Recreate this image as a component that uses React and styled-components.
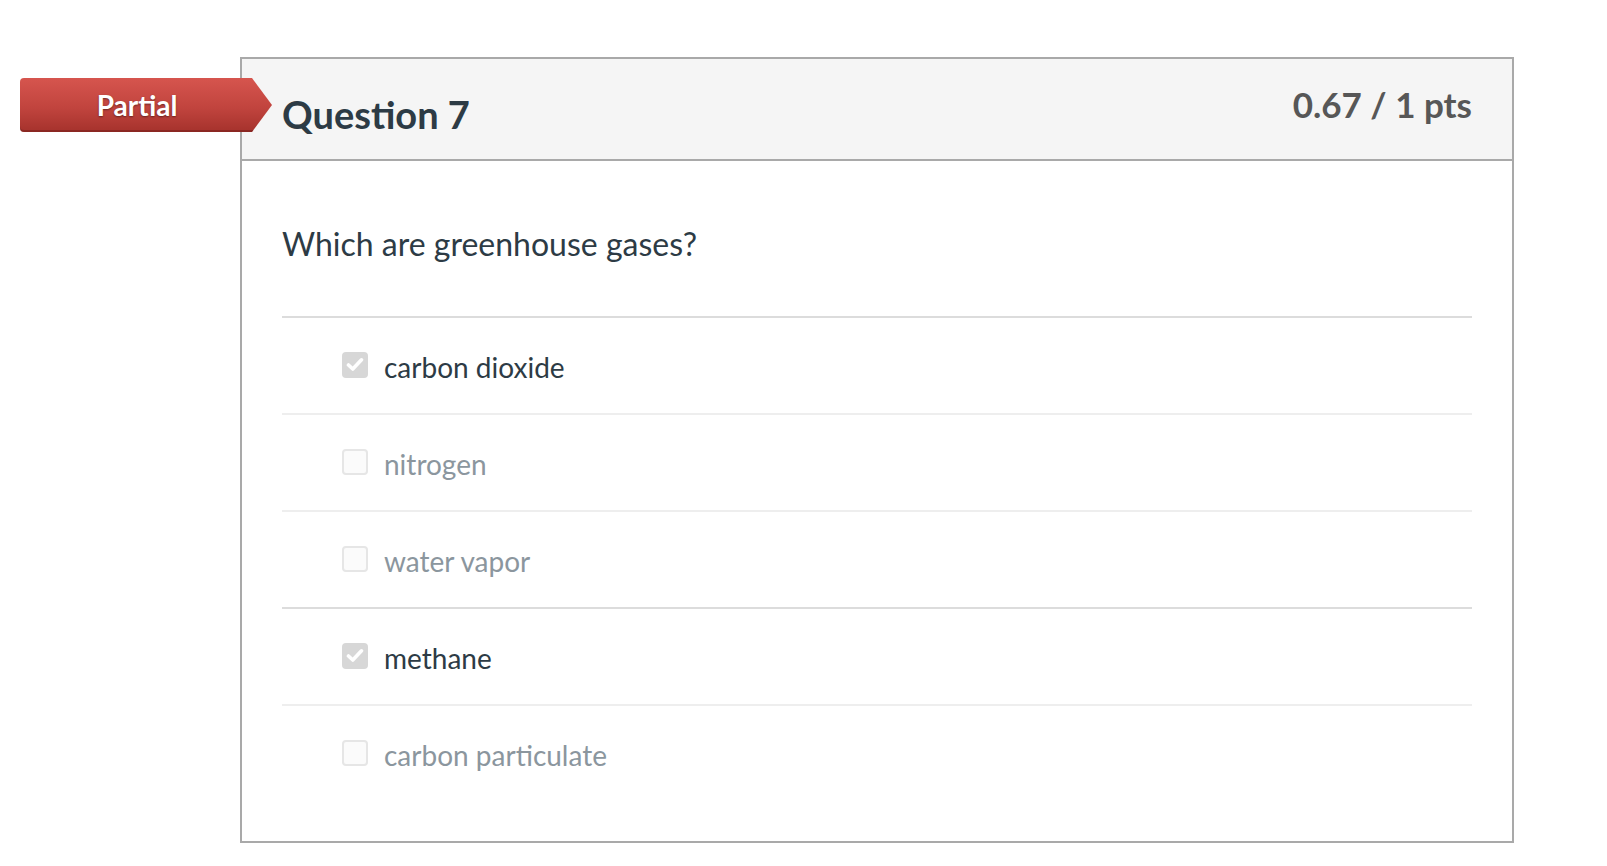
import styled, { createGlobalStyle } from "styled-components";

const GlobalStyle = createGlobalStyle`
  body {
    margin: 0;
    background: #fff;
    font-family: Lato, "Open Sans", sans-serif;
  }
`;

const answers = [
  { text: "carbon dioxide", checked: true },
  { text: "nitrogen", checked: false },
  { text: "water vapor", checked: false },
  { text: "methane", checked: true },
  { text: "carbon particulate", checked: false },
];

export default function App() {
  return (
    <>
      <GlobalStyle />
      <Page>
        <Badge>
          <span>Partial</span>
        </Badge>
        <Card>
          <Header>
            <Title>Question 7</Title>
            <Points>0.67 / 1 pts</Points>
          </Header>
          <Body>
            <QuestionText>Which are greenhouse gases?</QuestionText>
            <AnswerList>
              {answers.map((a) => (
                <Answer key={a.text} $selected={a.checked}>
                  <Box $checked={a.checked}>
                    {a.checked && (
                      <svg width="18" height="15" viewBox="0 0 18 15">
                        <path
                          d="M2.5 8 L6.8 12 L15.5 2.8"
                          fill="none"
                          stroke="#fff"
                          strokeWidth="3.6"
                          strokeLinecap="round"
                          strokeLinejoin="round"
                        />
                      </svg>
                    )}
                  </Box>
                  <Label $checked={a.checked}>{a.text}</Label>
                </Answer>
              ))}
            </AnswerList>
          </Body>
        </Card>
      </Page>
    </>
  );
}

const Page = styled.div`
  position: relative;
  padding: 57px 0 20px 240px;
`;

const Badge = styled.div`
  position: absolute;
  left: 20px;
  top: 78px;
  width: 252px;
  height: 54px;
  z-index: 2;
  display: flex;
  align-items: center;
  box-sizing: border-box;
  border-radius: 4px 0 0 4px;
  background: linear-gradient(to bottom, #d6554e 0%, #c1443e 55%, #a5322c 100%);
  box-shadow: inset 0 -2px 0 rgba(90, 20, 16, 0.35);
  clip-path: polygon(0 0, 232px 0, 100% 50%, 232px 100%, 0 100%);

  span {
    width: 234px;
    text-align: center;
    color: #fff;
    font-size: 28px;
    font-weight: 700;
    text-shadow: 0 1px 2px rgba(0, 0, 0, 0.45);
  }
`;

const Card = styled.div`
  width: 1274px;
  box-sizing: border-box;
  border: 2px solid #a9a9a9;
`;

const Header = styled.div`
  display: flex;
  justify-content: space-between;
  align-items: flex-start;
  height: 102px;
  box-sizing: border-box;
  padding: 24px 40px 0 40px;
  background: #f5f5f5;
  border-bottom: 2px solid #a9a9a9;
`;

const Title = styled.h2`
  margin: 9px 0 0;
  font-size: 38px;
  line-height: 1.2;
  font-weight: 700;
  color: #2d3b45;
`;

const Points = styled.div`
  font-size: 35px;
  line-height: 1.2;
  font-weight: 700;
  color: #575757;
`;

const Body = styled.div`
  padding: 64px 40px 40px 40px;
`;

const QuestionText = styled.p`
  margin: 0 0 53px;
  font-size: 32px;
  line-height: 1.2;
  color: #2d3b45;
`;

const AnswerList = styled.div`
  display: flex;
  flex-direction: column;
`;

const Answer = styled.div`
  display: flex;
  align-items: center;
  gap: 16px;
  height: 97px;
  box-sizing: border-box;
  padding: 4px 0 0 60px;
  border-top: 2px solid ${(p) => (p.$selected ? "#dcdcdc" : "#eeeeee")};
`;

const Box = styled.span`
  display: flex;
  align-items: center;
  justify-content: center;
  width: 26px;
  height: 26px;
  margin-top: -6px;
  box-sizing: border-box;
  border-radius: 4px;
  background: ${(p) => (p.$checked ? "#d7d7d7" : "#fbfbfb")};
  border: ${(p) => (p.$checked ? "none" : "2px solid #e6e6e6")};
`;

const Label = styled.span`
  font-size: 28px;
  line-height: 1.2;
  color: ${(p) => (p.$checked ? "#2d3b45" : "#8b969e")};
`;
